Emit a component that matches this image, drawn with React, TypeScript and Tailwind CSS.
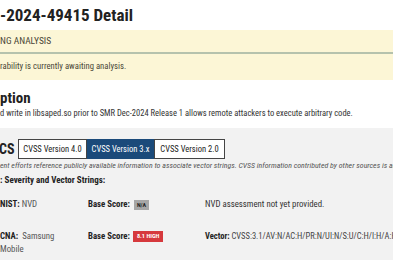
export default function App() {
  return (
    <div className="w-[393px] h-[267px] overflow-hidden bg-white text-[#222] font-['Roboto_Condensed',sans-serif]">
      <h2 className="pt-[5px] h-[30px] text-[17px] leading-[20px] font-bold whitespace-nowrap">-2024-49415 Detail</h2>

      <div className="bg-[#fcf6d6] text-[#4a4636]">
        <div className="h-[22px] flex items-center text-[9.5px] whitespace-nowrap">NG ANALYSIS</div>
        <div className="h-[2px] bg-[#b5c2ad]" />
        <div className="h-[26px] flex items-center text-[8.7px] whitespace-nowrap">rability is currently awaiting analysis.</div>
      </div>

      <h3 className="mt-[9px] text-[15px] leading-[18px] font-bold whitespace-nowrap">ption</h3>
      <p className="text-[8.5px] leading-[12px] whitespace-nowrap text-[#333]">
        d write in libsaped.so prior to SMR Dec-2024 Release 1 allows remote attackers to execute arbitrary code.
      </p>

      <div className="mt-[9px] h-[132px] bg-[#f2f2f2]">
        <div className="pt-[11px] flex items-center">
          <h3 className="w-[19px] -ml-[1px] text-[14px] leading-[18px] font-bold whitespace-nowrap">CS</h3>
          <div className="flex text-[8.5px] whitespace-nowrap">
            <div className="h-[20px] w-[69px] flex items-center justify-center bg-white border border-[#444]">CVSS Version 4.0</div>
            <div className="h-[20px] w-[67px] flex items-center justify-center bg-[#1b4a7a] text-white border border-[#1b4a7a]">CVSS Version 3.x</div>
            <div className="h-[20px] w-[71px] flex items-center justify-center bg-white border border-[#444]">CVSS Version 2.0</div>
          </div>
        </div>
        <p className="mt-[1px] text-[7.9px] leading-[11px] italic whitespace-nowrap text-[#555]">
          ent efforts reference publicly available information to associate vector strings. CVSS information contributed by other sources is also displayed.
        </p>
        <p className="mt-[3px] text-[9px] leading-[12px] font-bold whitespace-nowrap">: Severity and Vector Strings:</p>

        <div className="mt-[5px] grid grid-cols-[88px_117px_1fr] text-[8.8px] whitespace-nowrap">
          <div className="h-[27px] flex items-center"><b>NIST:</b>&nbsp;<span className="text-[#555]">NVD</span></div>
          <div className="h-[27px] flex items-center gap-[4px]">
            <b>Base Score:</b>
            <span className="h-[10px] px-[3px] flex items-center bg-[#a6a6a6] text-[#222] text-[6px] font-bold">N/A</span>
          </div>
          <div className="h-[27px] flex items-center text-[#333]">NVD assessment not yet provided.</div>

          <div className="pt-[12px] leading-[13px] text-[#555]">
            <div><b className="text-[#222]">CNA:</b>&nbsp; Samsung</div>
            <div>Mobile</div>
          </div>
          <div className="pt-[12px] h-[25px] flex items-center gap-[3px]">
            <b>Base Score:</b>
            <span className="h-[11px] px-[4px] flex items-center bg-[#d6393d] text-white text-[6.2px] font-bold">8.1 HIGH</span>
          </div>
          <div className="pt-[12px] h-[25px] flex items-center text-[8.5px]"><b>Vector:</b>&nbsp; <span className="text-[#444]">CVSS:3.1/AV:N/AC:H/PR:N/UI:N/S:U/C:H/I:H/A:H</span></div>
        </div>
      </div>
    </div>
  );
}
